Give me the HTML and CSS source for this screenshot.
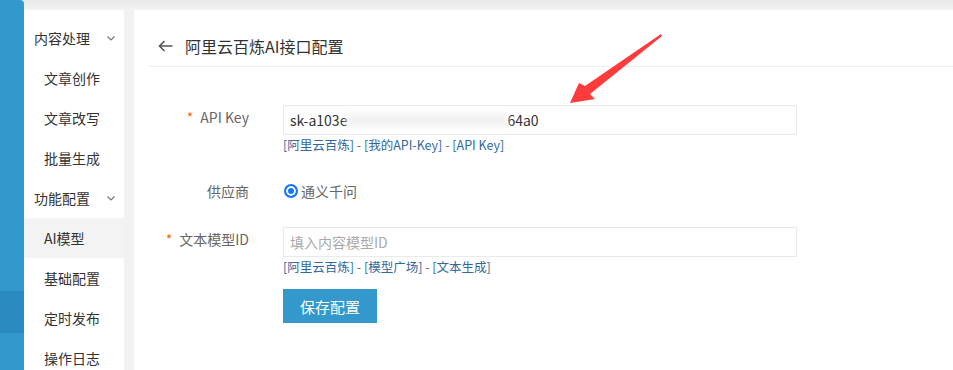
FILE: index.html
```html
<!DOCTYPE html>
<html lang="zh-CN">

<head>
    <meta charset="UTF-8">
    <meta name="viewport" content="width=device-width, initial-scale=1.0">
    <title>阿里云百炼AI接口配置</title>
    <link rel="stylesheet" href="styles.css">
</head>

<body>
    <div class="rail">
        <div class="rail-active"></div>
    </div>

    <div class="workspace">
        <div class="topbar"></div>

        <div class="below">
            <ul class="sidebar">
                <li class="menu-group">内容处理
                    <svg class="chevron" width="8" height="5" viewBox="0 0 8 5"><polyline points="0.5,0.5 4,4 7.5,0.5" /></svg>
                </li>
                <li class="menu-item">文章创作</li>
                <li class="menu-item">文章改写</li>
                <li class="menu-item">批量生成</li>
                <li class="menu-group">功能配置
                    <svg class="chevron" width="8" height="5" viewBox="0 0 8 5"><polyline points="0.5,0.5 4,4 7.5,0.5" /></svg>
                </li>
                <li class="menu-item active">AI模型</li>
                <li class="menu-item">基础配置</li>
                <li class="menu-item">定时发布</li>
                <li class="menu-item">操作日志</li>
            </ul>

            <div class="card">
                <div class="card-header">
                    <svg class="back" width="15" height="12" viewBox="0 0 15 12">
                        <path d="M14.5 6H1.5M6.5 1L1.5 6L6.5 11" />
                    </svg>
                    <span class="title">阿里云百炼AI接口配置</span>
                </div>

                <div class="form">
                    <div class="row">
                        <label class="label"><span class="req">*</span>API Key</label>
                        <div class="field">
                            <div class="text-input">sk-a103e<span class="masked"></span>64a0</div>
                            <div class="hint"><a href="#">[阿里云百炼]</a> - <a href="#">[我的API-Key]</a> - <a href="#">[API Key]</a></div>
                        </div>
                    </div>

                    <div class="row row-radio">
                        <label class="label">供应商</label>
                        <div class="field">
                            <span class="radio"></span><span class="radio-text">通义千问</span>
                        </div>
                    </div>

                    <div class="row">
                        <label class="label"><span class="req">*</span>文本模型ID</label>
                        <div class="field">
                            <div class="text-input placeholder">填入内容模型ID</div>
                            <div class="hint"><a href="#">[阿里云百炼]</a> - <a href="#">[模型广场]</a> - <a href="#">[文本生成]</a></div>
                            <button class="save">保存配置</button>
                        </div>
                    </div>
                </div>
            </div>
        </div>
    </div>

    <!-- annotation arrow drawn over the screenshot -->
    <svg class="pointer" width="953" height="370" viewBox="0 0 953 370">
        <polygon points="661,34 585,86 579,83 570,103 595,99 590,94 662,36" />
    </svg>
</body>

</html>
```

FILE: styles.css
```css
body {
    font-family: "Microsoft YaHei", "Noto Sans CJK SC", "Noto Sans", sans-serif;
    margin: 0;
    padding: 0;
    width: 953px;
    height: 370px;
    overflow: hidden;
    display: flex;
    background-color: #f2f2f2;
    position: relative;
    color: #333;
}

.rail {
    width: 24px;
    flex-shrink: 0;
    background-color: #3399cc;
    border-top-right-radius: 4px;
}

.rail-active {
    margin-top: 291px;
    height: 42px;
    background-color: #2a89bf;
}

.workspace {
    flex: 1;
    display: flex;
    flex-direction: column;
    min-height: 0;
}

.topbar {
    height: 10px;
    flex-shrink: 0;
    background: linear-gradient(#e9e9e9, #f3f3f3);
}

.below {
    flex: 1;
    display: flex;
    gap: 10px;
    min-height: 0;
    overflow: hidden;
}

.sidebar {
    list-style: none;
    margin: 0;
    padding: 8px 0 0 0;
    width: 100px;
    flex-shrink: 0;
    background-color: #fff;
    font-size: 14px;
}

.sidebar li {
    height: 40px;
    line-height: 40px;
    color: #333;
}

.menu-group {
    padding-left: 10px;
    display: flex;
    align-items: center;
    justify-content: space-between;
    padding-right: 9px;
}

.chevron {
    fill: none;
    stroke: #777;
    stroke-width: 1.2;
}

.menu-item {
    padding-left: 20px;
}

.menu-item.active {
    background-color: #f3f3f3;
}

.card {
    flex: 1;
    background-color: #fff;
    padding: 16px 0 0 15px;
}

.card-header {
    height: 40px;
    display: flex;
    align-items: center;
    border-bottom: 1px solid #ececec;
    padding-left: 9px;
}

.back {
    fill: none;
    stroke: #555;
    stroke-width: 1.6;
    margin-right: 12px;
}

.title {
    font-size: 16px;
    color: #333;
}

.form {
    padding-top: 38px;
}

.row {
    display: flex;
    gap: 34px;
    margin-bottom: 20px;
}

.row-radio {
    height: 32px;
    align-items: center;
}

.label {
    width: 100px;
    text-align: right;
    font-size: 14px;
    color: #666;
    line-height: 24px;
}

.row-radio .label {
    line-height: 32px;
}

.req {
    color: #ff6a00;
    margin-right: 7px;
}

.field {
    display: flex;
    flex-direction: column;
    align-items: flex-start;
}

.row-radio .field {
    flex-direction: row;
    align-items: center;
}

.text-input {
    width: 500px;
    height: 28px;
    line-height: 28px;
    border: 1px solid #eaeaea;
    padding: 0 6px;
    font-size: 14px;
    color: #333;
    display: flex;
    align-items: center;
}

.text-input.placeholder {
    color: #aaa;
}

.masked {
    display: inline-block;
    width: 160px;
    height: 12px;
    background-color: #f1f1f1;
    filter: blur(3px);
}

.hint {
    font-size: 12.5px;
    line-height: 20px;
    color: #666;
}

.hint a {
    color: #33689c;
    text-decoration: none;
}

.radio {
    width: 10px;
    height: 10px;
    border-radius: 50%;
    border: 2px solid #1677ff;
    box-shadow: inset 0 0 0 2px #fff;
    background-color: #1677ff;
    margin-left: 1px;
    margin-right: 3px;
}

.radio-text {
    font-size: 14px;
    color: #666;
}

.save {
    margin-top: 12px;
    width: 94px;
    height: 34px;
    border: none;
    background-color: #3399cc;
    color: #fff;
    font-family: inherit;
    font-size: 15px;
    cursor: pointer;
}

.pointer {
    position: absolute;
    left: 0;
    top: 0;
    pointer-events: none;
}

.pointer polygon {
    fill: #ff3b3b;
}
```
